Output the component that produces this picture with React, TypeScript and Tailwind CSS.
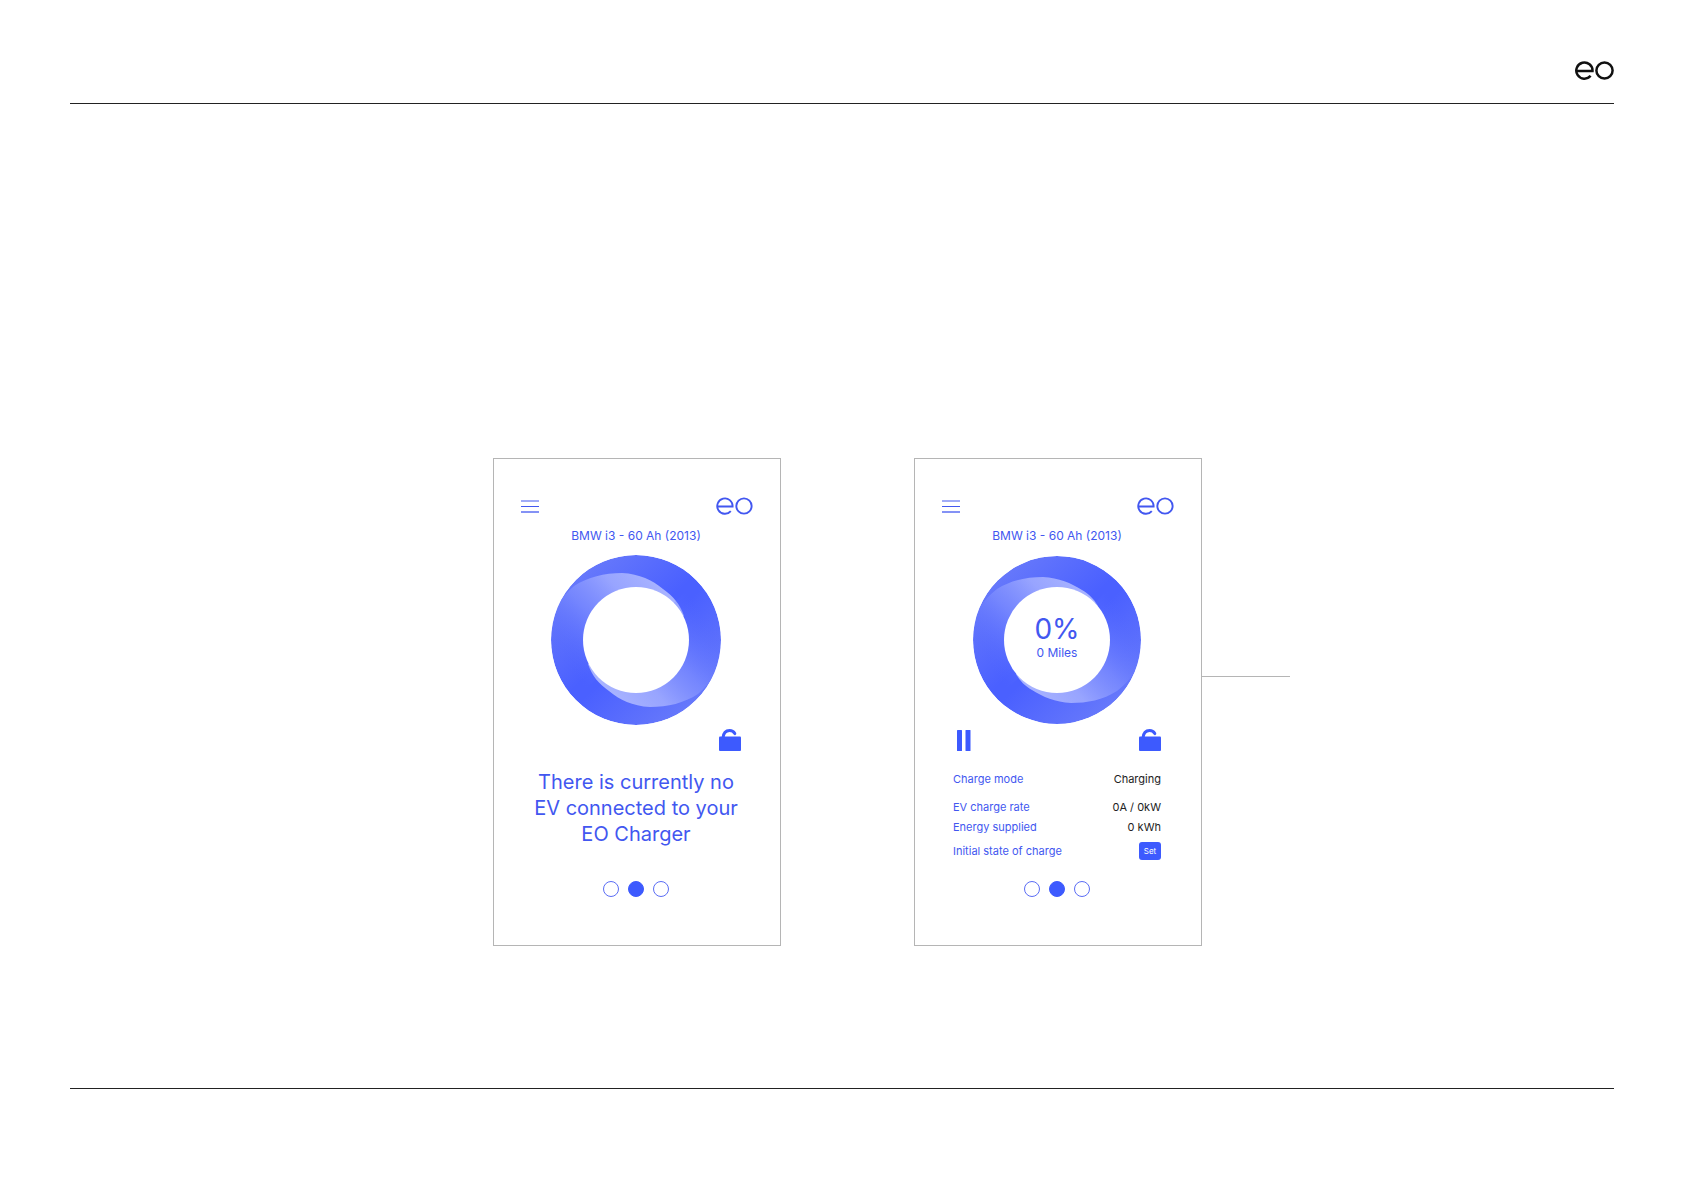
import { useId, type ReactNode } from "react";

const BRAND_TEXT = "text-[#4257f0]";

function EoLogo({ className, weight = 3 }: { className: string; weight?: number }) {
  return (
    <svg viewBox="0 0 39 19" fill="none" stroke="currentColor" strokeWidth={weight} className={className} role="img" aria-label="eo">
      <path d="M1.5 10H17.5A8.1 8.1 0 1 0 15.6 14.8" />
      <circle cx="29.5" cy="9.5" r="8.1" />
    </svg>
  );
}

function MenuIcon() {
  return (
    <svg viewBox="0 0 18 14" className="h-3.5 w-[18px]" fill="#4257f0">
      <rect y="1" width="18" height="2" opacity="0.5" />
      <rect y="7" width="18" height="1" />
      <rect y="12" width="18" height="2" opacity="0.65" />
    </svg>
  );
}

function LockOpenIcon() {
  return (
    <svg viewBox="0 0 22 22" className="h-[22px] w-[22px]">
      <rect x="0" y="7.5" width="22" height="14.5" rx="1" fill="#3d5afe" />
      <path d="M4 9C4.4 4.4 7 1.6 10.6 1.6C12.8 1.6 14.6 2.5 15.8 4.6" fill="none" stroke="#3d5afe" strokeWidth="3" strokeLinecap="round" />
    </svg>
  );
}

function PauseIcon() {
  return (
    <svg viewBox="0 0 14 21" className="h-[21px] w-3.5" fill="#3d5afe">
      <rect width="5" height="21" rx="0.5" />
      <rect x="8.5" width="5" height="21" rx="0.5" />
    </svg>
  );
}

// Upper-left highlight; the lower-right one is the same shape turned by 180 degrees
const SWOOSH_WIDE =
  "M-90 6L-85 -20C-82 -30 -76 -42 -62 -54C-48 -63 -32 -67 -14 -67C4 -66 16 -60 27 -51C37 -44 44 -36 48 -24L0 0L-53 52L-90 40Z";
const SWOOSH_NARROW =
  "M-90 6L-84 -16C-82 -27 -74 -40 -60 -51C-46 -60 -30 -63 -14 -63C2 -62 14 -57 25 -50C32 -46 37 -41 41 -34L0 0L-53 52L-90 40Z";

function ChargeRing({ narrow = false, children }: { narrow?: boolean; children?: ReactNode }) {
  const id = useId();
  const radius = narrow ? 84 : 85;
  const swoosh = narrow ? SWOOSH_NARROW : SWOOSH_WIDE;

  return (
    <div className="grid place-items-center">
      <svg viewBox="-85 -85 170 170" className="col-start-1 row-start-1 h-[170px] w-[170px]">
        <defs>
          <linearGradient id={`${id}-base`} gradientUnits="userSpaceOnUse" x1="-58" y1="-62" x2="58" y2="62">
            <stop offset="0" stopColor="#6678fb" />
            <stop offset="0.46" stopColor="#4a60ff" />
            <stop offset="0.54" stopColor="#4a60ff" />
            <stop offset="1" stopColor="#6678fb" />
          </linearGradient>
          <linearGradient id={`${id}-light`} gradientUnits="userSpaceOnUse" x1="30" y1="-52" x2="-66" y2="30">
            <stop offset="0" stopColor="#a9b4ff" />
            <stop offset="0.3" stopColor="#9ba7ff" stopOpacity="0.95" />
            <stop offset="0.6" stopColor="#8090ff" stopOpacity="0.65" />
            <stop offset="1" stopColor="#4f66ff" stopOpacity="0" />
          </linearGradient>
          <clipPath id={`${id}-disc`}>
            <circle r={radius} />
          </clipPath>
        </defs>
        <g clipPath={`url(#${id}-disc)`}>
          <circle r={radius} fill={`url(#${id}-base)`} />
          <path d={swoosh} fill={`url(#${id}-light)`} />
          <path d={swoosh} fill={`url(#${id}-light)`} transform="rotate(180)" />
        </g>
        <circle r="53" fill="#fff" />
      </svg>
      <div className="col-start-1 row-start-1 pb-0.5 text-center">{children}</div>
    </div>
  );
}

function PageDots({ name }: { name: string }) {
  return (
    <div className="flex justify-center gap-[9px]">
      {["Schedule", "Status", "History"].map((label, i) => (
        <input
          key={label}
          type="radio"
          name={name}
          aria-label={label}
          defaultChecked={i === 1}
          className="h-4 w-4 appearance-none rounded-full border border-[#5b6df5] checked:border-[#3d5afe] checked:bg-[#3d5afe]"
        />
      ))}
    </div>
  );
}

function PhoneScreen({ children }: { children: ReactNode }) {
  return (
    <section className={`flex h-[488px] w-72 flex-col border border-[#b5b5b5] bg-white pt-[38px] pr-0.5 ${BRAND_TEXT}`}>
      <div className="flex items-center justify-between pr-[25px] pl-[27px]">
        <button type="button" aria-label="Menu">
          <MenuIcon />
        </button>
        <EoLogo className="h-[18px] w-[37px]" weight={2} />
      </div>
      <h2 className="mt-[11px] mb-[9px] text-center text-[12px] leading-5">BMW i3 - 60 Ah (2013)</h2>
      {children}
    </section>
  );
}

function StatRow({ label, value, className = "" }: { label: string; value: ReactNode; className?: string }) {
  return (
    <div className={`flex items-center justify-between ${className}`}>
      <dt>{label}</dt>
      <dd className="text-[#222]">{value}</dd>
    </div>
  );
}

export default function App() {
  return (
    <div className="min-h-screen bg-white px-[70px] pt-[61px] font-['Inter',sans-serif]">
      <header className="flex justify-end border-b border-[#222] pb-[23px] text-[#111]">
        <EoLogo className="h-[19px] w-[39px]" weight={2.5} />
      </header>

      <main className="flex items-start justify-center border-b border-[#222] pt-[354px] pb-[142px] pl-[99px]">
        <PhoneScreen>
          <ChargeRing />
          <div className="mt-1 flex justify-end pr-[37px]">
            <button type="button" aria-label="Unlocked">
              <LockOpenIcon />
            </button>
          </div>
          <p className="mt-[18px] text-center text-[20px] leading-[26px]">
            There is currently no
            <br />
            EV connected to your
            <br />
            EO Charger
          </p>
          <div className="mt-auto mb-12">
            <PageDots name="screen-idle" />
          </div>
        </PhoneScreen>

        <div className="w-[133px]" />

        <PhoneScreen>
          <ChargeRing narrow>
            <div className="text-[28px] leading-7">0%</div>
            <div className="text-[12px] leading-5">0 Miles</div>
          </ChargeRing>
          <div className="mt-1 flex items-center justify-between pr-[38px] pl-[42px]">
            <button type="button" aria-label="Pause charging">
              <PauseIcon />
            </button>
            <button type="button" aria-label="Unlocked">
              <LockOpenIcon />
            </button>
          </div>
          <dl className="mt-[18px] px-[38px] text-[11px] leading-5">
            <StatRow label="Charge mode" value="Charging" />
            <StatRow label="EV charge rate" value="0A / 0kW" className="mt-2" />
            <StatRow label="Energy supplied" value="0 kWh" />
            <StatRow
              label="Initial state of charge"
              className="mt-1"
              value={
                <button type="button" className="block h-[18px] w-[22px] rounded-[3px] bg-[#3d5afe] text-center text-[8px] leading-[18px] text-white">
                  Set
                </button>
              }
            />
          </dl>
          <div className="mt-auto mb-12">
            <PageDots name="screen-charging" />
          </div>
        </PhoneScreen>

        {/* Callout line out of the charging screen */}
        <div className="mt-[218px] h-px w-[88px] bg-[#b5b5b5]" />
      </main>
    </div>
  );
}
